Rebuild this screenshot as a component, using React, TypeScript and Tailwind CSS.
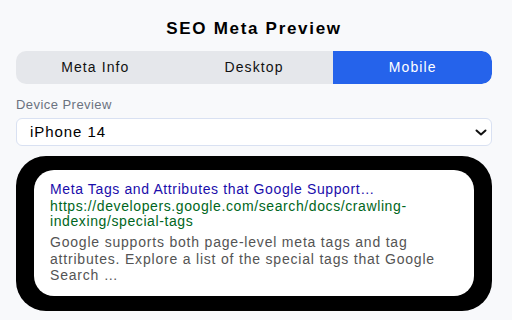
import React from 'react';

const tabs = ['Meta Info', 'Desktop', 'Mobile'];

const App: React.FC = () => {
    const active = 'Mobile';

    return (
        <div className="w-[512px] h-[320px] overflow-hidden bg-[#f8f9fb] pl-4 pr-5 pt-[15px] font-['Liberation_Sans',Arial,sans-serif] text-[#111]">
            <h1 className="text-center text-[17px] leading-[28px] font-bold tracking-[1.7px] text-black mb-[8px]">SEO Meta Preview</h1>

            {/* Tabs */}
            <div className="grid grid-cols-3 h-[33px] rounded-[10px] bg-[#e5e7eb] overflow-hidden">
                {tabs.map((t) => (
                    <button
                        key={t}
                        className={
                            t === active
                                ? 'bg-[#2563eb] text-white text-[14px] tracking-[1.1px] rounded-r-[10px]'
                                : 'text-[#111] text-[14px] tracking-[1.1px]'
                        }
                    >
                        {t}
                    </button>
                ))}
            </div>

            {/* Device select */}
            <p className="mt-[12px] text-[13px] leading-[18px] tracking-[0.45px] text-[#6b7280]">Device Preview</p>
            <div className="mt-[4px] h-[28px] rounded-[6px] border border-[#d9e1f2] bg-white flex items-center justify-between pl-[13px] pr-[4px]">
                <span className="text-[15px] tracking-[0.95px] text-black">iPhone 14</span>
                <svg width="12" height="7" viewBox="0 0 12 7" fill="none" stroke="#111" strokeWidth="2" strokeLinecap="round" strokeLinejoin="round">
                    <path d="M1.5 1.5l4.5 4 4.5-4" />
                </svg>
            </div>

            {/* Phone frame */}
            <div className="mt-[10px] bg-black rounded-[30px] px-[18px] pt-[14px] pb-[15px]">
                <div className="bg-white rounded-[20px] px-4 pt-[9px] pb-[12px] text-[14px]">
                    <p className="text-[#1a0dab] leading-[20px] tracking-[0.62px] whitespace-nowrap">Meta Tags and Attributes that Google Support…</p>
                    <p className="text-[#006621] leading-[15px] tracking-[0.6px] break-words">
                        https://developers.google.com/search/docs/crawling-indexing/special-tags
                    </p>
                    <p className="text-[#545454] leading-[16.5px] tracking-[0.8px] mt-[5px]">
                        Google supports both page-level meta tags and tag attributes. Explore a list of the special tags that Google Search …
                    </p>
                </div>
            </div>
        </div>
    );
};

export default App;
